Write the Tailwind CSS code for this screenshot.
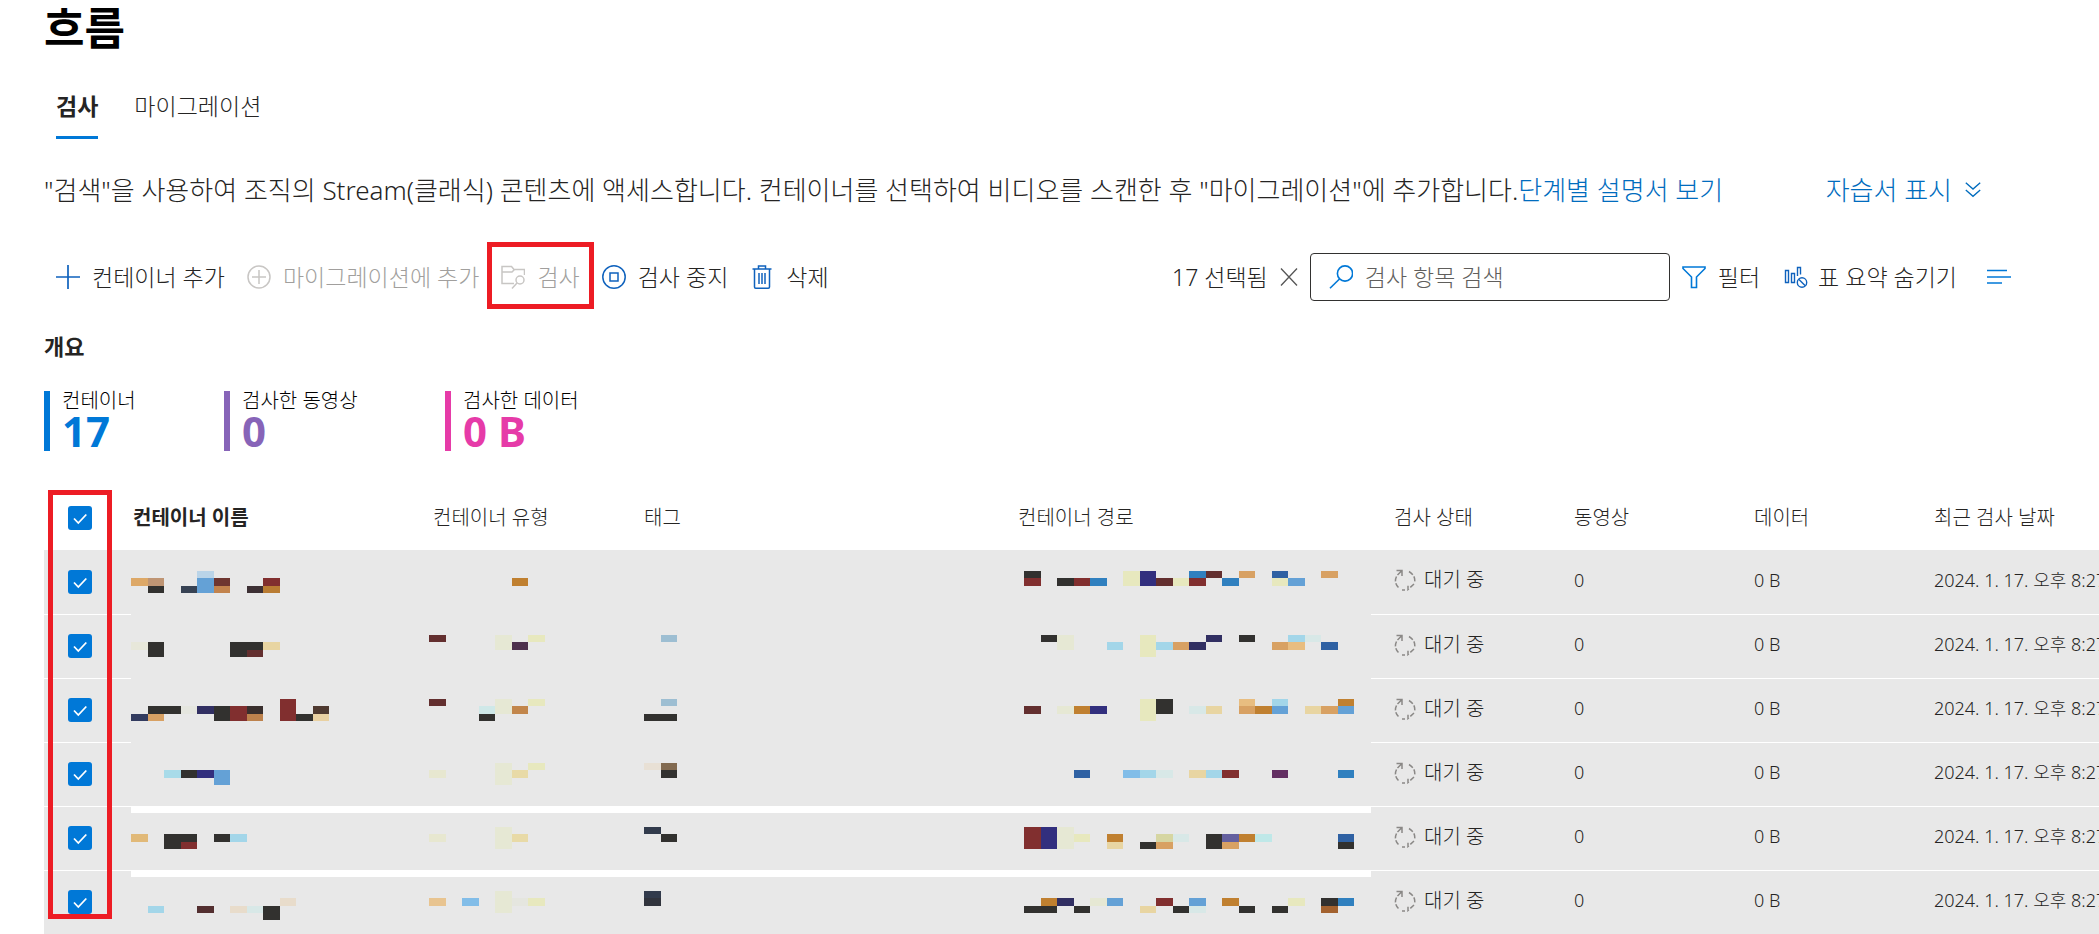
<!DOCTYPE html>
<html lang="ko">
  <head>
    <meta charset="UTF-8" />
    <meta name="viewport" content="width=device-width, initial-scale=1.0" />
    <title>흐름</title>
    <script src="https://cdn.jsdelivr.net/npm/@tailwindcss/browser@4"></script>
  </head>
  <body
    class="overflow-x-hidden bg-white font-['Noto_Sans','Noto_Sans_CJK_KR',sans-serif] font-light text-[#252423]"
  >
    <main class="pl-11">
      <h1 class="text-[44px] leading-[56px] font-bold text-black">흐름</h1>

      <nav class="mt-5 flex gap-9 pl-3 text-[23px] leading-[60px]">
        <a href="#scan" class="border-b-3 border-[#0078d7] font-bold">검사</a>
        <a href="#migrate" class="border-b-3 border-transparent">마이그레이션</a>
      </nav>

      <div class="mt-[31px] flex items-center text-[26px] leading-10 whitespace-nowrap">
        <p>
          "검색"을 사용하여 조직의 Stream(클래식) 콘텐츠에 액세스합니다. 컨테이너를 선택하여 비디오를 스캔한 후 "마이그레이션"에 추가합니다.<a href="#guide" class="text-[#006cbe]">단계별 설명서 보기</a>
        </p>
        <button class="ml-auto mr-[117px] flex items-center gap-3 text-[#006cbe]">
          자습서 표시
          <svg class="size-[18px]" viewBox="0 0 20 20" fill="none" stroke="currentColor" stroke-width="1.5">
            <path d="M2 2l8 7 8-7M2 10l8 7 8-7" />
          </svg>
        </button>
      </div>

      <div class="mt-[43px] flex h-12 items-stretch pr-[88px] pl-3 text-[23px] whitespace-nowrap">
        <div class="flex gap-[22px]">
          <button class="flex items-center gap-3">
            <svg class="size-6 text-[#0f62bd]" viewBox="0 0 24 24" fill="none" stroke="currentColor" stroke-width="1.7">
              <path d="M12 0v24M0 12h24" />
            </svg>
            컨테이너 추가
          </button>
          <button class="flex items-center gap-3 text-[#a19f9d]" disabled>
            <svg class="size-6 text-[#c8c6c4]" viewBox="0 0 24 24" fill="none" stroke="currentColor" stroke-width="1.5">
              <circle cx="12" cy="12" r="11" />
              <path d="M12 5v14M5 12h14" />
            </svg>
            마이그레이션에 추가
          </button>
          <button class="relative flex items-center gap-3 text-[#a19f9d]" disabled>
            <svg class="size-6 text-[#c8c6c4]" viewBox="0 0 24 24" fill="none" stroke="currentColor" stroke-width="1.5">
              <path d="M13 18.500H1V1.500h9.500l2.500 3h10.500V10M1 7h10l2.500-2.500" />
              <circle cx="19" cy="15" r="4" />
              <path d="M16 18l-5 5.500" />
            </svg>
            검사
            <span class="absolute -inset-x-3.5 -top-[11px] -bottom-2 border-5 border-[#ed1c24]"></span>
          </button>
          <button class="flex items-center gap-3">
            <svg class="size-6 text-[#0f62bd]" viewBox="0 0 24 24" fill="none" stroke="currentColor" stroke-width="1.5">
              <circle cx="12" cy="12" r="11.200" />
              <rect x="8" y="8" width="8" height="8" />
            </svg>
            검사 중지
          </button>
          <button class="flex items-center gap-3">
            <svg class="size-6 text-[#0f62bd]" viewBox="0 0 24 24" fill="none" stroke="currentColor" stroke-width="1.5">
              <path d="M2.500 4h19M8.500 4V1h7v3M4.500 4v18q0 1.200 1.200 1.200h12.600q1.200 0 1.200-1.200V4M9 8v11M12 8v11M15 8v11" />
            </svg>
            삭제
          </button>
        </div>

        <div class="ml-auto flex items-center">
          <span>17 선택됨</span>
          <button class="mx-3" aria-label="선택 취소">
            <svg class="h-5 w-[18px]" viewBox="0 0 18 20" fill="none" stroke="#555" stroke-width="1.3">
              <path d="M1 1.500l16 17M17 1.500l-16 17" />
            </svg>
          </button>
          <label class="flex h-12 w-[360px] items-center gap-3 rounded border border-[#323130] pl-[18px]">
            <svg class="size-6 shrink-0" viewBox="0 0 24 24" fill="none" stroke="#0078d7" stroke-width="1.6">
              <circle cx="16" cy="8.500" r="7.600" />
              <path d="M10.500 14L1 23.300" />
            </svg>
            <input
              type="search"
              placeholder="검사 항목 검색"
              aria-label="검사 항목 검색"
              class="w-full min-w-0 outline-none placeholder:text-[#605e5c]"
            />
          </label>
          <button class="ml-3 flex items-center gap-3">
            <svg class="size-6" viewBox="0 0 24 24" fill="none" stroke="#0078d7" stroke-width="1.6">
              <path d="M1 2h22v1.500l-8.500 8.500v10.500h-5V12L1 3.500z" />
            </svg>
            필터
          </button>
          <button class="ml-6 flex items-center gap-2.5">
            <svg class="size-6" viewBox="0 0 24 24" fill="none" stroke="#0f62bd" stroke-width="1.4">
              <path d="M1.500 5.500h3v12h-3zM7.500 8.500h3v9h-3zM13.500 11V2.500h3v7" />
              <circle cx="18" cy="17.500" r="4.700" />
              <path d="M14.700 14.200l6.600 6.600" />
            </svg>
            표 요약 숨기기
          </button>
          <button class="ml-[30px]" aria-label="보기 옵션">
            <svg class="size-6" viewBox="0 0 24 24" fill="none" stroke="#0078d7" stroke-width="1.6">
              <path d="M0 5.500h20M0 12h24M0 18h15" />
            </svg>
          </button>
        </div>
      </div>

      <h2 class="mt-[29px] text-[22px] leading-8 font-bold">개요</h2>

      <dl class="mt-[29px] flex text-[20px]">
        <div class="h-[60px] w-[180px] border-l-6 border-[#0078d7] pl-3">
          <dt class="leading-5 text-black">컨테이너</dt>
          <dd class="text-[42px] leading-10 font-bold text-[#0078d7]">17</dd>
        </div>
        <div class="h-[60px] w-[221px] border-l-6 border-[#8764b8] pl-3">
          <dt class="leading-5 text-black">검사한 동영상</dt>
          <dd class="text-[42px] leading-10 font-bold text-[#8764b8]">0</dd>
        </div>
        <div class="h-[60px] border-l-6 border-[#e63ba8] pl-3">
          <dt class="leading-5 text-black">검사한 데이터</dt>
          <dd class="text-[42px] leading-10 font-bold text-[#e63ba8]">0 B</dd>
        </div>
      </dl>

      <div class="relative mt-[35px] overflow-hidden">
        <table class="w-full table-fixed border-separate border-spacing-0 text-left text-[20px] whitespace-nowrap">
          <colgroup>
            <col class="w-[87px]" />
            <col class="w-[298px]" />
            <col class="w-[215px]" />
            <col class="w-[372px]" />
            <col class="w-[355px]" />
            <col class="w-[180px]" />
            <col class="w-[180px]" />
            <col class="w-[180px]" />
            <col />
          </colgroup>
          <thead>
            <tr>
              <th class="h-16 p-0 pl-6">
                <label class="grid size-6">
                  <input type="checkbox" checked aria-label="모두 선택" class="col-start-1 row-start-1 size-6 appearance-none rounded-[3px] bg-[#0078d7]" />
                  <svg class="pointer-events-none col-start-1 row-start-1 size-6" viewBox="0 0 24 24" fill="none" stroke="#fff" stroke-width="1.8"><path d="M6 12.500l4.300 4.500 8-8.500" /></svg>
                </label>
              </th>
              <th class="p-0 pl-0.5 font-bold">컨테이너 이름</th>
              <th class="p-0 pl-1 font-light">컨테이너 유형</th>
              <th class="p-0 font-light">태그</th>
              <th class="p-0 pl-0.5 font-light">컨테이너 경로</th>
              <th class="p-0 pl-[23px] font-light">검사 상태</th>
              <th class="p-0 pl-[23px] font-light">동영상</th>
              <th class="p-0 pl-[23px] font-light">데이터</th>
              <th class="p-0 pl-[23px] font-light">최근 검사 날짜</th>
            </tr>
          </thead>
          <tbody id="rows" class="bg-[#e8e8e8]"></tbody>
        </table>
        <div class="pointer-events-none absolute top-1 left-1 h-[429px] w-16 border-5 border-[#ed1c24]"></div>
      </div>
    </main>

    <script>
      const palette = {
        k: '#32312f', r: '#812f2f', m: '#632f2f', n: '#322f7e', v: '#312f62',
        b: '#3080bf', d: '#2f61a3', s: '#64a1d6', l: '#82bde8', c: '#a3d6e9',
        i: '#d8e8e7', y: '#e7e8be', p: '#e6e8d4', w: '#e8d5a2', t: '#d8a163',
        a: '#e8bd80', o: '#c08030', g: '#e5e6df', e: '#9dbed2', h: '#323b4c',
        u: '#e8dccb',
      };

      // Redacted cells. Each block is [column, line, width, height, colour].
      const rows = [
        {
          name: [[0,1,1,1,'#dda867'],[1,1,1,1,'#bf9574'],[1,2,1,1,'k'],[3,2,1,1,'#374253'],[4,0,1,1,'#bad4e8'],[4,1,1,2,'s'],[5,1,1,1,'#6e3630'],[5,2,1,1,'#c2834d'],[7,2,1,1,'#3d3034'],[8,1,1,1,'r'],[8,2,1,1,'#b97c33']],
          type: [[5,1,1,1,'o']],
          tag: [],
          path: [[0,0,1,1,'k'],[0,1,1,1,'r'],[2,1,1,1,'k'],[3,1,1,1,'r'],[4,1,1,1,'b'],[6,0,1,2,'y'],[7,0,1,2,'n'],[8,1,1,1,'m'],[9,1,1,1,'y'],[10,0,1,1,'b'],[10,1,1,1,'r'],[11,0,1,1,'m'],[12,1,1,1,'b'],[13,0,1,1,'t'],[15,0,1,1,'d'],[15,1,1,1,'y'],[16,1,1,1,'s'],[18,0,1,1,'t']],
        },
        {
          name: [[0,1,1,1,'#e7e7da'],[1,1,1,2,'k'],[6,1,2,2,'k'],[7,2,1,1,'m'],[8,1,1,1,'w']],
          type: [[0,0,1,1,'m'],[4,0,1,2,'p'],[5,1,1,1,'#4d304c'],[6,0,1,1,'y']],
          tag: [[1,0,1,1,'e']],
          path: [[1,0,1,1,'k'],[2,0,1,2,'p'],[5,1,1,1,'c'],[7,0,1,3,'y'],[8,1,1,1,'c'],[9,1,1,1,'t'],[10,1,1,1,'v'],[11,0,1,1,'v'],[13,0,1,1,'k'],[15,1,1,1,'t'],[16,0,1,1,'c'],[16,1,1,1,'a'],[17,0,1,1,'i'],[18,1,1,1,'d']],
        },
        {
          name: [[0,2,1,1,'#323b5f'],[1,1,2,1,'k'],[1,2,1,1,'t'],[3,1,1,1,'g'],[4,1,1,1,'v'],[5,1,1,2,'k'],[6,1,1,2,'r'],[7,1,1,1,'#392f2d'],[7,2,1,1,'#bd824d'],[9,0,1,3,'r'],[10,2,1,1,'k'],[11,1,1,1,'#4f3a30'],[11,2,1,1,'#e9d1a2']],
          type: [[0,0,1,1,'m'],[3,1,1,1,'#cfe8e8'],[3,2,1,1,'k'],[4,0,1,2,'p'],[5,1,1,1,'#c2864b'],[6,0,1,1,'y']],
          tag: [[1,0,1,1,'e'],[0,2,2,1,'k']],
          path: [[0,1,1,1,'m'],[2,1,1,1,'p'],[3,1,1,1,'o'],[4,1,1,1,'n'],[7,0,1,3,'y'],[8,0,1,2,'k'],[10,1,1,1,'i'],[11,1,1,1,'w'],[13,0,1,1,'a'],[13,1,1,1,'t'],[14,1,1,1,'o'],[15,0,1,1,'c'],[15,1,1,1,'s'],[17,1,1,1,'w'],[18,1,1,1,'t'],[19,0,1,1,'o'],[19,1,1,1,'s']],
        },
        {
          name: [[2,1,1,1,'#a8dbe9'],[3,1,1,1,'k'],[4,1,1,1,'n'],[5,1,1,2,'s']],
          type: [[0,1,1,1,'#e7e7d0'],[4,0,1,3,'p'],[5,1,1,1,'#e8daa7'],[6,0,1,1,'y']],
          tag: [[0,0,1,1,'#e8e0d5'],[1,0,1,1,'#826a50'],[1,1,1,1,'k']],
          path: [[3,1,1,1,'d'],[6,1,1,1,'l'],[7,1,1,1,'c'],[8,1,1,1,'i'],[10,1,1,1,'w'],[11,1,1,1,'c'],[12,1,1,1,'r'],[15,1,1,1,'#632f62'],[19,1,1,1,'b']],
        },
        {
          gap: true,
          name: [[0,1,1,1,'#e1b978'],[2,1,2,2,'k'],[3,2,1,1,'r'],[5,1,1,1,'k'],[6,1,1,1,'c']],
          type: [[0,1,1,1,'#e7e7d0'],[4,0,1,3,'p'],[5,1,1,1,'#e8daa7']],
          tag: [[0,0,1,1,'h'],[1,1,1,1,'k']],
          path: [[0,0,1,3,'r'],[1,0,1,3,'n'],[2,0,1,3,'p'],[3,1,1,1,'y'],[5,1,1,1,'o'],[5,2,1,1,'w'],[7,2,1,1,'k'],[8,1,1,1,'#d6d6a2'],[8,2,1,1,'t'],[9,1,1,1,'i'],[11,1,1,2,'k'],[12,1,1,1,'#64609f'],[12,2,1,1,'t'],[13,1,1,1,'o'],[14,1,1,1,'#bfe8e8'],[19,1,1,1,'d'],[19,2,1,1,'k']],
        },
        {
          gap: true,
          name: [[1,2,1,1,'c'],[4,2,1,1,'#532f30'],[6,2,1,1,'u'],[7,2,1,1,'i'],[8,2,1,2,'k'],[9,1,1,1,'u']],
          type: [[0,1,1,1,'#e8c490'],[2,1,1,1,'l'],[4,0,1,3,'p'],[5,1,1,1,'g'],[6,1,1,1,'y']],
          tag: [[0,0,1,1,'h'],[0,1,1,1,'#31343d']],
          path: [[0,2,2,1,'k'],[1,1,1,1,'o'],[2,1,1,1,'v'],[3,2,1,1,'k'],[4,1,1,1,'p'],[5,1,1,1,'s'],[7,2,1,1,'w'],[8,1,1,1,'r'],[9,2,1,1,'k'],[10,1,1,1,'s'],[10,2,1,1,'i'],[12,1,1,1,'o'],[13,2,1,1,'k'],[15,2,1,1,'k'],[16,1,1,1,'y'],[18,1,1,1,'k'],[18,2,1,1,'#a3622f'],[19,1,1,1,'b']],
        },
      ];

      const lines = [21, 28, 36, 43, 50];
      const colX = (n) => Math.round(n * 16.5);

      function mosaic(blocks, gap) {
        const top = gap ? 7 : 0;
        const rects = blocks
          .map(([x, y, w, h, color]) => {
            const left = colX(x);
            return `<rect x="${left}" y="${lines[y] - top}" width="${colX(x + w) - left}" height="${lines[y + h] - lines[y]}" fill="${palette[color] || color}" />`;
          })
          .join('');
        return `<svg class="block w-[330px] ${gap ? 'h-[57px]' : 'h-16'}" shape-rendering="crispEdges" aria-hidden="true">${rects}</svg>`;
      }

      document.getElementById('rows').innerHTML = rows
        .map((row, i) => {
          const line = i === 0 ? '' : 'border-t border-white';
          const masked = row.gap ? 'border-t-7 border-white' : '';
          return `
          <tr>
            <td class="h-16 p-0 pb-px pl-6 ${line}">
              <label class="grid size-6">
                <input type="checkbox" checked aria-label="행 ${i + 1} 선택" class="col-start-1 row-start-1 size-6 appearance-none rounded-[3px] bg-[#0078d7]" />
                <svg class="pointer-events-none col-start-1 row-start-1 size-6" viewBox="0 0 24 24" fill="none" stroke="#fff" stroke-width="1.8"><path d="M6 12.500l4.300 4.500 8-8.500" /></svg>
              </label>
            </td>
            <td class="overflow-hidden p-0 ${masked}">${mosaic(row.name, row.gap)}</td>
            <td class="overflow-hidden p-0 ${masked}">${mosaic(row.type, row.gap)}</td>
            <td class="overflow-hidden p-0 ${masked}">${mosaic(row.tag, row.gap)}</td>
            <td class="overflow-hidden p-0 pl-2 ${masked}">${mosaic(row.path, row.gap)}</td>
            <td class="p-0 pb-1 pl-[23px] ${line}">
              <span class="flex items-center gap-2">
                <svg class="size-[22px]" viewBox="0 0 22 22" fill="none" stroke="#8a8886" stroke-width="1.5">
                  <path d="M2.500 1.500h5.500v5.500M8 1.500L3.500 6" />
                  <path d="M2.500 7.500Q-.500 14 5 19M8 21h3M15 2.500q7 4.500 5.500 11M20 15l-6 5.500v-4" stroke-dasharray="5 2" />
                </svg>
                대기 중
              </span>
            </td>
            <td class="p-0 pb-1 pl-[23px] text-[18px] ${line}">0</td>
            <td class="p-0 pb-1 pl-[23px] text-[18px] ${line}">0 B</td>
            <td class="p-0 pb-1 pl-[23px] text-[18px] ${line}">2024. 1. 17. 오후 8:27</td>
          </tr>`;
        })
        .join('');
    </script>
  </body>
</html>
